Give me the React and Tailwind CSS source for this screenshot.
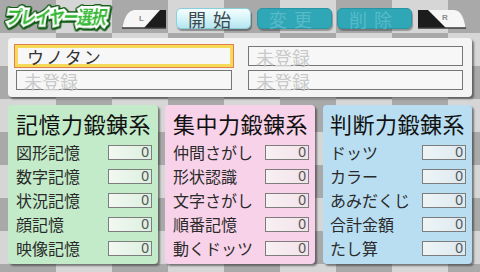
import React from "react";

const groups = [
  {
    title: "記憶力鍛錬系",
    bg: "bg-[#c3ebc9]",
    box: "bg-[linear-gradient(90deg,#f2f8f2,#dcefe0)]",
    items: ["図形記憶", "数字記憶", "状況記憶", "顔記憶", "映像記憶"],
  },
  {
    title: "集中力鍛錬系",
    bg: "bg-[#f8d2e8]",
    box: "bg-[linear-gradient(90deg,#f8f0f3,#f2e2ea)]",
    items: ["仲間さがし", "形状認識", "文字さがし", "順番記憶", "動くドッツ"],
  },
  {
    title: "判断力鍛錬系",
    bg: "bg-[#b9def2]",
    box: "bg-[linear-gradient(90deg,#eef4f6,#dce9f0)]",
    items: ["ドッツ", "カラー", "あみだくじ", "合計金額", "たし算"],
  },
];

const slots = [
  { name: "ウノタン", selected: true },
  { name: "未登録" },
  { name: "未登録" },
  { name: "未登録" },
];

const ShoulderL = () => (
  <svg width="44" height="21" viewBox="0 0 44 21" className="block">
    <path d="M0.5 20 C2 11 5 3 12 2 L44 2 L44 20 Z" fill="#f6f6f6" />
    <path d="M22 20 L38 2 L44 2 L44 20 Z" fill="#1c1c1c" />
    <path d="M0 20 L44 20" stroke="#3a3a3a" strokeWidth="1.6" />
    <text x="17" y="13" fontSize="8" fontWeight="700" fill="#8a8a8a" fontFamily="Liberation Sans, sans-serif">L</text>
  </svg>
);

const ShoulderR = () => (
  <svg width="48" height="21" viewBox="0 0 48 21" className="block">
    <path d="M0 2 L36 2 C43 2.5 46 10 47.5 20 L0 20 Z" fill="#f6f6f6" />
    <path d="M0 2 L10 2 L28 20 L0 20 Z" fill="#1c1c1c" />
    <path d="M0 20 L48 20" stroke="#3a3a3a" strokeWidth="1.6" />
    <text x="24" y="12" fontSize="8" fontWeight="700" fill="#8a8a8a" fontFamily="Liberation Sans, sans-serif">R</text>
  </svg>
);

export default function App() {
  return (
    <div className="w-[480px] h-[272px] overflow-hidden flex flex-col bg-[conic-gradient(#d6d6d6_25%,#a9a9a9_0_50%,#d6d6d6_0_75%,#a9a9a9_0)] bg-size-[112px_66px] font-['Noto_Sans_CJK_JP','Noto_Sans',sans-serif]">
      {/* top bar */}
      <div className="flex items-start h-[38px]">
        <div className="ml-[7px] mt-[4px] w-[105px] h-[24px] flex items-center">
          <span className="block origin-left whitespace-nowrap text-[18px] leading-none font-bold tracking-[-1px] -skew-x-12 scale-x-[0.84] text-[#34b834] [-webkit-text-stroke:5px_#ffffff] [paint-order:stroke_fill] [filter:drop-shadow(1px_0_0_#0d5a10)_drop-shadow(-1px_0_0_#0d5a10)_drop-shadow(0_1px_0_#0d5a10)_drop-shadow(0_-1px_0_#0d5a10)_drop-shadow(1px_1px_0_#0d5a10)]">
            プレイヤー選択
          </span>
        </div>
        <div className="ml-[10px] mt-[8px]">
          <ShoulderL />
        </div>
        <div className="ml-[10px] mt-[8px] w-[75px] h-[21px] rounded-[5px] border border-[#8ccfdc] bg-[linear-gradient(#f4fdfe,#d6f4f8_50%,#b4e6ef)] shadow-[1px_2px_1px_rgba(0,0,0,0.35)] flex items-center pl-[11px] text-[18px] leading-none tracking-[7px] text-[#3e474c]">
          開始
        </div>
        <div className="ml-[6px] mt-[8px] w-[75px] h-[21px] rounded-[5px] border border-[#2895a4] bg-[#2fa7b7] shadow-[1px_2px_1px_rgba(0,0,0,0.3)] flex items-center pl-[11px] text-[18px] leading-none tracking-[7px] text-[#58bac7]">
          変更
        </div>
        <div className="ml-[5px] mt-[8px] w-[75px] h-[21px] rounded-[5px] border border-[#2895a4] bg-[#2fa7b7] shadow-[1px_2px_1px_rgba(0,0,0,0.3)] flex items-center pl-[11px] text-[18px] leading-none tracking-[7px] text-[#58bac7]">
          削除
        </div>
        <div className="ml-[6px] mt-[8px]">
          <ShoulderR />
        </div>
      </div>

      {/* player slots */}
      <div className="mx-[8px] h-[59px] rounded-[4px] bg-[#f4f4f4] shadow-[2px_2px_2px_rgba(40,40,40,0.55)] pl-[8px] pt-[8px] grid grid-cols-[216px_215px] grid-rows-[20px_20px] grid-flow-col gap-x-[16px] gap-y-[4px]">
        {slots.map((s, i) => (
          <div
            key={i}
            className={`relative h-[20px] border border-[#767676] bg-[#f7f7f7] flex items-center leading-none ${
              s.selected ? "pl-[10px] text-[17px] tracking-[2px] text-[#333333]" : "pl-[7px] pt-[1px] text-[18px] text-[#c9c9c9]"
            }`}
          >
            {s.selected && (
              <div className="absolute -inset-[3px] border border-[#e0804c]">
                <div className="w-full h-full border-[3px] border-[#f7d95a]" />
              </div>
            )}
            <span className="relative">{s.name}</span>
          </div>
        ))}
      </div>

      {/* training groups */}
      <div className="flex mt-[8px] pl-[8px]">
        {groups.map((g, gi) => (
          <div
            key={g.title}
            className={`${g.bg} ${gi === 0 ? "" : gi === 1 ? "ml-[7px]" : "ml-[8px]"} ${
              gi === 2 ? "w-[149px] pl-[7px]" : "w-[150px] pl-[8px]"
            } h-[159px] rounded-[4px] shadow-[2px_2px_2px_rgba(40,40,40,0.55)] pt-[6px] pr-[6px]`}
          >
            <div className="text-[22px] leading-[24px] tracking-[0.5px] text-[#111111] mb-[5px] whitespace-nowrap">
              {g.title}
            </div>
            {g.items.map((it) => (
              <div key={it} className="flex items-center justify-between h-[24px]">
                <span className="text-[16px] leading-none text-[#2a2a2a] whitespace-nowrap">{it}</span>
                <div
                  className={`w-[44px] h-[15px] border border-[#7d7d7d] ${g.box} flex items-center justify-end pr-[2px] text-[14px] leading-none text-[#555555] font-['Liberation_Sans_Narrow','Liberation_Sans',sans-serif]`}
                >
                  0
                </div>
              </div>
            ))}
          </div>
        ))}
      </div>
    </div>
  );
}
